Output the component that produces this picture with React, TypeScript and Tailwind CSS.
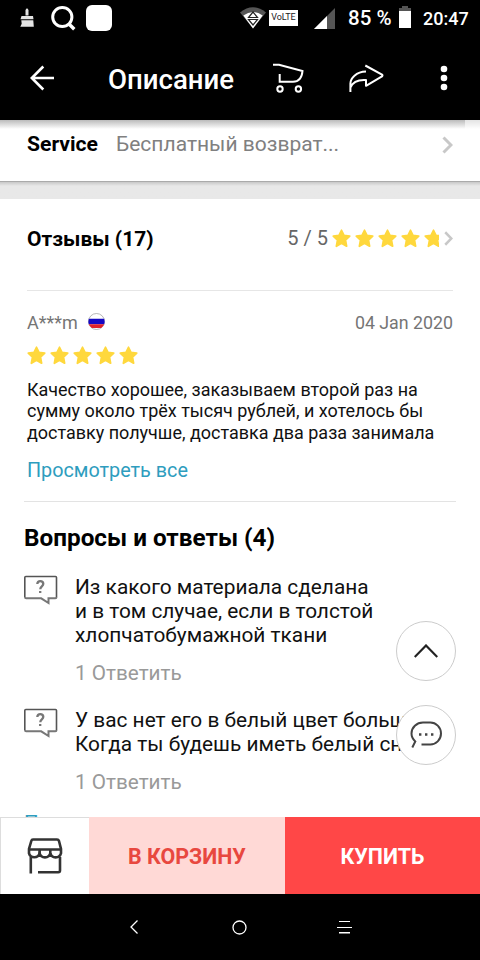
import type { ReactNode } from 'react'

const questions = [
  {
    lines: ['Из какого материала сделана', 'и в том случае, если в толстой', 'хлопчатобумажной ткани'],
    answer: '1 Ответить',
  },
  {
    lines: ['У вас нет его в белый цвет больше?', 'Когда ты будешь иметь белый снова'],
    answer: '1 Ответить',
  },
]

const reviewLines = [
  'Качество хорошее, заказываем второй раз на',
  'сумму около трёх тысяч рублей, и хотелось бы',
  'доставку получше, доставка два раза занимала',
]

function Star() {
  return (
    <svg className="w-[19px] h-[19px] flex-shrink-0" viewBox="0 0 19 19">
      <path
        d="M9.5 1.300l2.500 5 5.700.8-4.200 4 1.100 6.100-5.100-2.900-5.100 2.900 1.100-6.100-4.200-4 5.700-.8z"
        fill="#ffd83d"
        stroke="#ffd83d"
        strokeWidth="1.800"
        strokeLinejoin="round"
      />
    </svg>
  )
}

function Stars({ className = '' }: { className?: string }) {
  return (
    <div className={`flex gap-1 overflow-hidden ${className}`}>
      {[0, 1, 2, 3, 4].map(i => (
        <Star key={i} />
      ))}
    </div>
  )
}

function StatusBar() {
  return (
    <div className="flex items-center h-9 pl-5 text-white flex-shrink-0">
      <svg className="w-[14px] h-[20px]" viewBox="20 8 14 20" fill="#e4e4e4">
        <path d="M25.5 10l1-1.5h1l1 1.5v5.5h-3zM21.500 16h11.500l.5 3.2H20.500zM21.3 20.3h12l.5 6.5H20.3l1.4-3z" />
      </svg>
      <svg className="ml-[17px] w-[26px] h-[26px]" viewBox="51 5 26 26" fill="none" stroke="#fff" strokeWidth="3">
        <circle cx="62.3" cy="17" r="9.6" />
        <path d="M69 24l5.300 5.300" strokeWidth="3.400" />
      </svg>
      <div className="ml-[9px] w-[26px] h-[26px] rounded-md bg-white" />

      <svg className="ml-[128px] w-[26px] h-[22px]" viewBox="240 7 26 22">
        <path d="M240 12.500Q253 2 266 12.500L253 28.500z" fill="#555" />
        <path d="M243.300 15.500Q253 8.500 262.700 15.500L253 28.500z" fill="#fff" />
        <path d="M253 12l4.500 5.500h-9zM253 25l4.500-5.500h-9z" fill="#fff" stroke="#222" strokeWidth="1.200" />
      </svg>
      <div className="ml-[3px] w-[29px] h-4 bg-white flex items-center justify-center text-[9px] text-[#222] tracking-[-0.1px]">
        VoLTE
      </div>
      <svg className="ml-[16px] w-[21px] h-[21px]" viewBox="0 0 21 21">
        <path d="M21 0v21H0z" fill="#555" />
        <path d="M13 8v13H0z" fill="#fff" />
      </svg>
      <span className="ml-[13px] pt-px w-[44px] text-[20.5px] font-medium whitespace-nowrap">85 %</span>
      <svg className="ml-[7px] mb-[2px] w-3 h-[22px]" viewBox="0 0 12 22">
        <path d="M3 0h6v2h3v3H0V2h3z" fill="#555" />
        <path d="M0 5h12v17H0z" fill="#fff" />
      </svg>
      <span className="ml-[12px] text-[18px] font-medium">20:47</span>
    </div>
  )
}

function Header() {
  return (
    <header className="flex items-center h-[84px] pl-[30px] text-white flex-shrink-0">
      <svg className="w-[25px] h-[26px]" viewBox="30 65 25 26" fill="none" stroke="#fff" strokeWidth="2.600">
        <path d="M43.300 66.500L31.800 78l11.500 11.500M31.500 78H54" />
      </svg>
      <h1 className="ml-[53px] w-[128px] pt-[4px] text-[27.6px] font-medium leading-none whitespace-nowrap">Описание</h1>
      <svg className="ml-[36px] w-[32px] h-[30px]" viewBox="272 63 32 30" fill="none" stroke="#fff" strokeWidth="2">
        <path d="M273 64.800h6l23.500 6.200c-.5 6-3.500 10.700-9.500 10.700h-13.300V74" />
        <circle cx="280" cy="89" r="2.700" />
        <circle cx="298.400" cy="89" r="2.700" />
      </svg>
      <svg
        className="ml-[44px] w-[36px] h-[30px]"
        viewBox="348 63 36 30"
        fill="none"
        stroke="#fff"
        strokeWidth="2"
        strokeLinejoin="round"
      >
        <path d="M365.300 65.500L382 74.600q1 .9 0 1.800L366 85.800V80c-8.500-.6-13.500 2.500-15.600 7.500M366 71.600c-10 .2-15.600 7-15.600 12V92" />
      </svg>
      <svg className="ml-[56px] w-2 h-[26px]" viewBox="0 0 8 26" fill="#fff">
        <circle cx="4" cy="4" r="3.300" />
        <circle cx="4" cy="13" r="3.300" />
        <circle cx="4" cy="22" r="3.300" />
      </svg>
    </header>
  )
}

function Chevron({ className }: { className: string }) {
  return (
    <svg className={className} viewBox="0 0 11 18" fill="none" stroke="#c8c8c8" strokeWidth="3" preserveAspectRatio="none">
      <path d="M1.500 1.500L9 9l-7.500 7.500" />
    </svg>
  )
}

function Question({ lines, answer }: { lines: string[]; answer: string }) {
  return (
    <div className="flex h-[133px] pl-6">
      <svg className="w-[34px] h-[30px] flex-shrink-0" viewBox="0 0 34 30" fill="none" stroke="#555" strokeWidth="1.600">
        <path d="M.8 22V2.500q0-1 1-1h29.700q1 0 1 1V22" />
        <path d="M1 22q0 1.300 1.200 1.300h15l7.300 4.700v-4.700h6.800q1.200 0 1.200-1.300" stroke="#777" strokeWidth="2" />
        <path d="M13.300 9q.2-2.800 3-2.800t3 2.600c0 2.600-3 2.400-3 5.400M16.200 16v2" stroke="#777" strokeWidth="2.300" />
      </svg>
      <div className="ml-[17px] text-[20.85px] leading-6 whitespace-nowrap text-[#111]">
        {lines.map(line => (
          <p key={line}>{line}</p>
        ))}
        <p className="mt-[14px] text-[20.7px] text-[#999]">{answer}</p>
      </div>
    </div>
  )
}

function RoundButton({ children }: { children: ReactNode }) {
  return (
    <button className="w-[60px] h-[60px] rounded-full border border-[#ccc] bg-white flex items-center justify-center">
      {children}
    </button>
  )
}

export default function App() {
  return (
    <div className="relative flex flex-col w-[480px] h-[960px] overflow-hidden bg-black font-['Roboto',sans-serif]">
      <StatusBar />
      <Header />

      <main className="flex-1 min-h-0 overflow-hidden bg-white">
        {/* Service */}
        <div className="flex h-[61px] pl-[27px] bg-linear-to-b from-[#bbb] via-white via-[9px] to-white">
          <span className="mt-[12px] w-[89px] text-[21.1px] leading-6 font-bold">Service</span>
          <span className="mt-[12px] text-[21px] leading-6 text-[#808080] whitespace-nowrap">Бесплатный возврат...</span>
          <Chevron className="ml-auto mr-[12px] mt-[16px] w-[11px] h-[18px]" />
          <div className="w-[15px] h-[9px] bg-white/60" />
        </div>
        <div className="h-[18px] border-t border-[#aaa] bg-linear-to-b from-[#c8c8c8] via-[#e8e8e8] via-[4px] to-[#e8e8e8]" />

        {/* Reviews */}
        <section className="px-[27px]">
          <div className="flex items-center h-[92px] pb-[12px] border-b border-[#e6e6e6]">
            <h2 className="text-[21px] leading-6 font-bold">Отзывы (17)</h2>
            <span className="ml-auto mb-px text-[20px] leading-6 text-[#666]">5 / 5</span>
            <Stars className="mb-px ml-[4px] w-[107px]" />
            <Chevron className="mb-px ml-[5px] w-[9px] h-[15px]" />
          </div>
          <div className="flex items-center h-5 mt-[22px] text-[17.8px] text-[#757575]">
            <span className="mb-[2px] w-[61px] text-[18px]">A***m</span>
            <svg className="mb-[4px] w-[17px] h-[17px]" viewBox="0 0 17 17">
              <circle cx="8.500" cy="8.500" r="8" fill="#fff" stroke="#999" strokeWidth=".7" />
              <path d="M.8 5.700h15.400q.8 2.800 0 5.600H.8q-.8-2.800 0-5.600z" fill="#1508c4" />
              <path d="M.8 11.300h15.400a8 8 0 0 1-3 3.600H3.800a8 8 0 0 1-3-3.600z" fill="#e0202a" />
            </svg>
            <span className="ml-auto">04 Jan 2020</span>
          </div>
          <Stars className="-ml-[0.5px] mt-[12.5px]" />
          <div className="mt-[14.5px] text-[17.98px] leading-[21.3px] whitespace-nowrap text-[#111]">
            {reviewLines.map(line => (
              <p key={line}>{line}</p>
            ))}
          </div>
          <p className="mt-[16px] text-[19.8px] leading-6 text-[#2e9dbe]">Просмотреть все</p>
        </section>
        <div className="mx-6 mt-[18px] h-px bg-[#e3e3e3]" />

        {/* Questions */}
        <h2 className="mt-[21px] mb-[22px] pl-6 text-[24.3px] leading-[30px] font-bold">Вопросы и ответы (4)</h2>
        {questions.map(q => (
          <Question key={q.lines[0]} {...q} />
        ))}
        <p className="-mt-[30px] pl-6 text-[20.5px] leading-6 text-[#2e9dbe]">Просмотреть все</p>
      </main>

      {/* Floating actions */}
      <div className="absolute right-6 top-[621px] flex flex-col gap-6">
        <RoundButton>
          <svg className="w-6 h-[14px]" viewBox="0 0 24 14" fill="none" stroke="#222" strokeWidth="2.200">
            <path d="M.7 13L12 1.500 23.300 13" />
          </svg>
        </RoundButton>
        <RoundButton>
          <svg className="w-[32px] h-[28px]" viewBox="0 0 32 28" fill="none" stroke="#444" strokeWidth="2">
            <path d="M11.500 23.500H20A10.700 11 0 0 0 31 12.500A10.700 11 0 0 0 20 1.500h-7A11.500 11 0 0 0 1.500 12.500q0 4.500 3.800 8L2.300 26.500" />
            <path d="M9 13.500h2.400M15 13.500h2.400M21 13.500h2.400" strokeWidth="2.400" />
          </svg>
        </RoundButton>
      </div>

      {/* Purchase bar */}
      <div className="flex h-[77px] flex-shrink-0 text-[21.4px] font-bold">
        <div className="flex items-center justify-center w-[89px] bg-white border-t border-l border-[#ddd]">
          <svg className="w-[36px] h-[38px]" viewBox="27 836 36 38" fill="none" stroke="#333" strokeWidth="2.600">
            <path d="M33 838.500h24q1.500 0 2 1.500l2 8v4.300a5.500 5.300 0 0 1-10.700 0 5.500 5.300 0 0 1-10.700 0 5.500 5.300 0 0 1-10.600 0V848l2.300-8q.4-1.500 1.700-1.500z" />
            <path d="M29 848.500h32M39.600 848.500v4.500M50.300 848.500v4.500M30.800 856v16.500M60 856v13.500q0 1.700-1.700 1.700H38" />
          </svg>
        </div>
        <button className="w-[196px] pt-[3px] bg-[#ffd9d6] text-[#e8483f]">В КОРЗИНУ</button>
        <button className="w-[195px] pt-[3px] bg-[#ff4747] text-white">КУПИТЬ</button>
      </div>

      {/* System navigation */}
      <nav className="flex items-center h-[66px] flex-shrink-0 pl-[130px]">
        <svg className="w-2 h-[14px]" viewBox="0 0 8 14" fill="none" stroke="#fff" strokeWidth="1.300">
          <path d="M7.500 .5L1 7l6.500 6.500" />
        </svg>
        <svg className="ml-[94px] w-[15px] h-[15px]" viewBox="0 0 15 15" fill="none" stroke="#fff" strokeWidth="1.300">
          <circle cx="7.500" cy="7.500" r="6.500" />
        </svg>
        <svg className="ml-[90px] w-[15px] h-[14px]" viewBox="0 0 15 14" fill="#fff">
          <path d="M2 1h11v1H2zM0 7h15v1H0zM2 12h11v1.500H2z" />
        </svg>
      </nav>
    </div>
  )
}
